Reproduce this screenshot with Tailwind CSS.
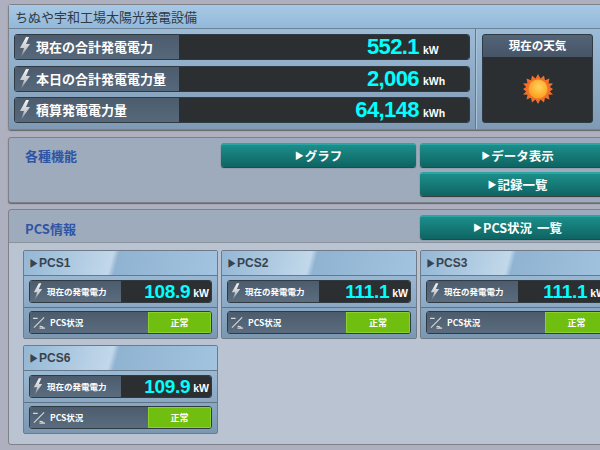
<!DOCTYPE html>
<html lang="ja">
<head>
  <meta charset="UTF-8">
  <title>ちぬや宇和工場太陽光発電設備</title>
  <script src="https://cdn.jsdelivr.net/npm/@tailwindcss/browser@4"></script>
</head>
<body class="bg-[#aeb0bf] h-[450px] w-[600px] overflow-hidden font-['Noto_Sans_CJK_JP',sans-serif]">
  <svg class="absolute w-0 h-0">
    <defs>
      <linearGradient id="boltFill" x1="0" y1="0" x2="0" y2="1"><stop offset="0" stop-color="#f4f4f4"/><stop offset="0.600" stop-color="#c4c8cc"/><stop offset="1" stop-color="#6f7a85"/></linearGradient>
      <symbol id="bolt" viewBox="0 0 12 20"><path d="M7 0 L1 11 L5 11 L2 20 L11 7 L7 7 L10 0 Z" fill="url(#boltFill)"/></symbol>
      <symbol id="phase" viewBox="0 0 14 12"><path d="M0 1 H5 M1 11 L12 0 M7 10 C8.500 8.500 9.500 11 11 10 M7 11.500 H13" fill="none" stroke="#d5d8da" stroke-width="1.200"/></symbol>
    </defs>
  </svg>

  <div class="pt-[4px] pl-[8px] w-[640px] flex flex-col">
    <!-- top panel -->
    <section class="h-[126px] rounded-[3px] border border-[#7d8288] bg-[linear-gradient(180deg,#a3c3df,#7f9ab4)] shadow-[0_1px_1px_#666]">
      <h1 class="h-[24px] pl-[6px] flex items-center text-[13px] text-[#2f3a45] border-b border-[#6d8296] bg-[linear-gradient(180deg,#a8c9e5,#93b8d8)]">ちぬや宇和工場太陽光発電設備</h1>
      <div class="flex h-[100px]">
        <div class="w-[467px] border-r border-[#62788c] pl-[5px] pr-[5px] pt-[5px] flex flex-col gap-[5.5px]">
          <div class="h-[26px] flex rounded-[3px] border border-[#2f3a42] overflow-hidden">
            <div class="w-[164px] flex items-center gap-[5px] pl-[4px] bg-[linear-gradient(180deg,#4c5c6d,#56687a)] text-[13px] font-bold text-white"><svg class="w-[12px] h-[20px]"><use href="#bolt"/></svg>現在の合計発電電力</div>
            <div class="flex-1 flex items-center justify-end bg-[#2b2f32] text-[#0ff] font-['Liberation_Sans',sans-serif] font-bold leading-none"><span class="text-[22px] tracking-[-0.6px]">552.1</span><span class="w-[50px] pl-[4px] pt-[6px] text-[10.500px] text-white">kW</span></div>
          </div>
          <div class="h-[26px] flex rounded-[3px] border border-[#2f3a42] overflow-hidden">
            <div class="w-[164px] flex items-center gap-[5px] pl-[4px] bg-[linear-gradient(180deg,#4c5c6d,#56687a)] text-[13px] font-bold text-white"><svg class="w-[12px] h-[20px]"><use href="#bolt"/></svg>本日の合計発電電力量</div>
            <div class="flex-1 flex items-center justify-end bg-[#2b2f32] text-[#0ff] font-['Liberation_Sans',sans-serif] font-bold leading-none"><span class="text-[22px] tracking-[-0.6px]">2,006</span><span class="w-[50px] pl-[4px] pt-[6px] text-[10.500px] text-white">kWh</span></div>
          </div>
          <div class="h-[26px] flex rounded-[3px] border border-[#2f3a42] overflow-hidden">
            <div class="w-[164px] flex items-center gap-[5px] pl-[4px] bg-[linear-gradient(180deg,#4c5c6d,#56687a)] text-[13px] font-bold text-white"><svg class="w-[12px] h-[20px]"><use href="#bolt"/></svg>積算発電電力量</div>
            <div class="flex-1 flex items-center justify-end bg-[#2b2f32] text-[#0ff] font-['Liberation_Sans',sans-serif] font-bold leading-none"><span class="text-[22px] tracking-[-0.6px]">64,148</span><span class="w-[50px] pl-[4px] pt-[6px] text-[10.500px] text-white">kWh</span></div>
          </div>
        </div>
        <div class="pl-[5px] pt-[5px] border-l border-[#a9c2d8]">
          <div class="w-[111px] h-[89px] rounded-[3px] border border-[#2f3a42] bg-[#2b2f32] overflow-hidden">
            <div class="h-[22px] flex items-center justify-center text-[11.500px] font-bold text-white bg-[linear-gradient(180deg,#536477,#465566)]">現在の天気</div>
            <div class="flex justify-center pt-[17px]">
              <svg class="w-[30px] h-[30px]" viewBox="0 0 30 30">
                <defs><radialGradient id="sunFill" cx="0.550" cy="0.400" r="0.600"><stop offset="0" stop-color="#ffd35c"/><stop offset="1" stop-color="#fb9f1c"/></radialGradient></defs>
                <polygon fill="#f0702a" points="15,0 17.500,4.500 21,1.500 22,6.200 26.500,4.500 25.500,9.200 30,9.500 26.800,13 30,15 26.800,17.500 30,20.500 25.500,20.800 26.500,25.500 22,23.800 21,28.500 17.500,25.500 15,30 12.500,25.500 9,28.500 8,23.800 3.500,25.500 4.500,20.800 0,20.500 3.200,17.500 0,15 3.200,13 0,9.500 4.500,9.200 3.500,4.500 8,6.200 9,1.500 12.500,4.500"/>
                <circle cx="15" cy="15" r="9.500" fill="url(#sunFill)"/>
              </svg>
            </div>
          </div>
        </div>
      </div>
    </section>

    <!-- functions -->
    <section class="mt-[7px] h-[66px] rounded-[3px] border border-[#7d8288] bg-[#9dabbd] shadow-[0_1px_1px_#666] flex">
      <h2 class="w-[212px] pl-[16px] pt-[9px] text-[13px] font-bold leading-[18px] text-[#2f55a4]">各種機能</h2>
      <div class="grid grid-cols-[195px_195px] gap-x-[4px] gap-y-[5px] pt-[5px] content-start">
        <a class="h-[24px] rounded-[3px] border-t-2 border-[#2ba5a3] bg-[linear-gradient(180deg,#1c8e8a,#0e6462)] shadow-[0_1px_1px_#333] flex items-center justify-center text-[12.500px] font-bold text-white"><span class="text-[9px] mr-[1px]">▶</span>グラフ</a>
        <a class="h-[24px] rounded-[3px] border-t-2 border-[#2ba5a3] bg-[linear-gradient(180deg,#1c8e8a,#0e6462)] shadow-[0_1px_1px_#333] flex items-center justify-center text-[12.500px] font-bold text-white"><span class="text-[9px] mr-[1px]">▶</span>データ表示</a>
        <span></span>
        <a class="h-[24px] rounded-[3px] border-t-2 border-[#2ba5a3] bg-[linear-gradient(180deg,#1c8e8a,#0e6462)] shadow-[0_1px_1px_#333] flex items-center justify-center text-[12.500px] font-bold text-white"><span class="text-[9px] mr-[1px]">▶</span>記録一覧</a>
      </div>
    </section>

    <!-- PCS info -->
    <section class="mt-[6px] h-[236px] rounded-[3px] border border-[#7d8288] bg-[linear-gradient(180deg,#9dabbd_0,#9dabbd_33px,#b9c3d1_33px)]">
      <div class="h-[33px] flex border-b border-[#8a929c]">
        <h2 class="w-[411px] pl-[16px] pt-[10px] text-[13px] font-bold leading-[18px] text-[#2f55a4]">PCS情報</h2>
        <a class="mt-[5px] w-[195px] h-[24px] rounded-[3px] border-t-2 border-[#2ba5a3] bg-[linear-gradient(180deg,#1c8e8a,#0e6462)] shadow-[0_1px_1px_#333] flex items-center justify-center text-[12.500px] font-bold text-white [word-spacing:2px]"><span class="text-[9px] mr-[1px]">▶</span>PCS状況 一覧</a>
      </div>
      <div class="grid grid-cols-[195px_196px_195px] gap-x-[3px] gap-y-[6px] pl-[14px] pt-[7px]">

        <div class="h-[89px] rounded-[2px] border border-[#6f7a86] bg-[linear-gradient(180deg,#a6c5df,#7b98b3)]">
          <div class="h-[25px] pl-[5px] flex items-center text-[12px] font-bold text-[#39434e] font-['Liberation_Sans',sans-serif] border-b border-[#66798c] bg-[linear-gradient(105deg,#93b7d5_0,#c2d8ea_45%,#90b3d1_48%,#a2c4e0_100%)]"><span class="text-[10px]">▶</span>PCS1</div>
          <div class="h-[32px] border-b border-[#5f7386] px-[5px] pt-[4px]">
            <div class="h-[23px] flex rounded-[3px] border border-[#2f3a42] overflow-hidden">
              <div class="w-[91px] flex items-center gap-[4px] pl-[3px] bg-[linear-gradient(180deg,#4c5c6d,#5a6c7e)] text-[8.500px] font-bold text-white"><svg class="w-[10px] h-[17px]"><use href="#bolt"/></svg>現在の発電電力</div>
              <div class="flex-1 flex items-center justify-end pr-[2px] bg-[#2b2f32] text-[#0ff] font-['Liberation_Sans',sans-serif] font-bold leading-none"><span class="text-[19px] tracking-[-0.3px]">108.9</span><span class="pl-[3px] pt-[4px] text-[10.500px] text-white">kW</span></div>
            </div>
          </div>
          <div class="h-[30px] px-[5px] pt-[3px]">
            <div class="h-[23px] flex rounded-[3px] border border-[#2f3a42] overflow-hidden">
              <div class="w-[118px] flex items-center gap-[4px] pl-[3px] bg-[linear-gradient(180deg,#4c5c6d,#5a6c7e)] text-[8.500px] font-bold text-white"><svg class="w-[13px] h-[12px]"><use href="#phase"/></svg>PCS状況</div>
              <div class="flex-1 flex items-center justify-center bg-[#6fbe10] border border-[#8bd02f] text-[9px] font-bold text-white">正常</div>
            </div>
          </div>
        </div>

        <div class="h-[89px] rounded-[2px] border border-[#6f7a86] bg-[linear-gradient(180deg,#a6c5df,#7b98b3)]">
          <div class="h-[25px] pl-[5px] flex items-center text-[12px] font-bold text-[#39434e] font-['Liberation_Sans',sans-serif] border-b border-[#66798c] bg-[linear-gradient(105deg,#93b7d5_0,#c2d8ea_45%,#90b3d1_48%,#a2c4e0_100%)]"><span class="text-[10px]">▶</span>PCS2</div>
          <div class="h-[32px] border-b border-[#5f7386] px-[5px] pt-[4px]">
            <div class="h-[23px] flex rounded-[3px] border border-[#2f3a42] overflow-hidden">
              <div class="w-[91px] flex items-center gap-[4px] pl-[3px] bg-[linear-gradient(180deg,#4c5c6d,#5a6c7e)] text-[8.500px] font-bold text-white"><svg class="w-[10px] h-[17px]"><use href="#bolt"/></svg>現在の発電電力</div>
              <div class="flex-1 flex items-center justify-end pr-[2px] bg-[#2b2f32] text-[#0ff] font-['Liberation_Sans',sans-serif] font-bold leading-none"><span class="text-[19px] tracking-[-0.3px]">111.1</span><span class="pl-[3px] pt-[4px] text-[10.500px] text-white">kW</span></div>
            </div>
          </div>
          <div class="h-[30px] px-[5px] pt-[3px]">
            <div class="h-[23px] flex rounded-[3px] border border-[#2f3a42] overflow-hidden">
              <div class="w-[118px] flex items-center gap-[4px] pl-[3px] bg-[linear-gradient(180deg,#4c5c6d,#5a6c7e)] text-[8.500px] font-bold text-white"><svg class="w-[13px] h-[12px]"><use href="#phase"/></svg>PCS状況</div>
              <div class="flex-1 flex items-center justify-center bg-[#6fbe10] border border-[#8bd02f] text-[9px] font-bold text-white">正常</div>
            </div>
          </div>
        </div>

        <div class="h-[89px] rounded-[2px] border border-[#6f7a86] bg-[linear-gradient(180deg,#a6c5df,#7b98b3)]">
          <div class="h-[25px] pl-[5px] flex items-center text-[12px] font-bold text-[#39434e] font-['Liberation_Sans',sans-serif] border-b border-[#66798c] bg-[linear-gradient(105deg,#93b7d5_0,#c2d8ea_45%,#90b3d1_48%,#a2c4e0_100%)]"><span class="text-[10px]">▶</span>PCS3</div>
          <div class="h-[32px] border-b border-[#5f7386] px-[5px] pt-[4px]">
            <div class="h-[23px] flex rounded-[3px] border border-[#2f3a42] overflow-hidden">
              <div class="w-[91px] flex items-center gap-[4px] pl-[3px] bg-[linear-gradient(180deg,#4c5c6d,#5a6c7e)] text-[8.500px] font-bold text-white"><svg class="w-[10px] h-[17px]"><use href="#bolt"/></svg>現在の発電電力</div>
              <div class="flex-1 flex items-center justify-end pr-[2px] bg-[#2b2f32] text-[#0ff] font-['Liberation_Sans',sans-serif] font-bold leading-none"><span class="text-[19px] tracking-[-0.3px]">111.1</span><span class="pl-[3px] pt-[4px] text-[10.500px] text-white">kW</span></div>
            </div>
          </div>
          <div class="h-[30px] px-[5px] pt-[3px]">
            <div class="h-[23px] flex rounded-[3px] border border-[#2f3a42] overflow-hidden">
              <div class="w-[118px] flex items-center gap-[4px] pl-[3px] bg-[linear-gradient(180deg,#4c5c6d,#5a6c7e)] text-[8.500px] font-bold text-white"><svg class="w-[13px] h-[12px]"><use href="#phase"/></svg>PCS状況</div>
              <div class="flex-1 flex items-center justify-center bg-[#6fbe10] border border-[#8bd02f] text-[9px] font-bold text-white">正常</div>
            </div>
          </div>
        </div>

        <div class="h-[89px] rounded-[2px] border border-[#6f7a86] bg-[linear-gradient(180deg,#a6c5df,#7b98b3)]">
          <div class="h-[25px] pl-[5px] flex items-center text-[12px] font-bold text-[#39434e] font-['Liberation_Sans',sans-serif] border-b border-[#66798c] bg-[linear-gradient(105deg,#93b7d5_0,#c2d8ea_45%,#90b3d1_48%,#a2c4e0_100%)]"><span class="text-[10px]">▶</span>PCS6</div>
          <div class="h-[32px] border-b border-[#5f7386] px-[5px] pt-[4px]">
            <div class="h-[23px] flex rounded-[3px] border border-[#2f3a42] overflow-hidden">
              <div class="w-[91px] flex items-center gap-[4px] pl-[3px] bg-[linear-gradient(180deg,#4c5c6d,#5a6c7e)] text-[8.500px] font-bold text-white"><svg class="w-[10px] h-[17px]"><use href="#bolt"/></svg>現在の発電電力</div>
              <div class="flex-1 flex items-center justify-end pr-[2px] bg-[#2b2f32] text-[#0ff] font-['Liberation_Sans',sans-serif] font-bold leading-none"><span class="text-[19px] tracking-[-0.3px]">109.9</span><span class="pl-[3px] pt-[4px] text-[10.500px] text-white">kW</span></div>
            </div>
          </div>
          <div class="h-[30px] px-[5px] pt-[3px]">
            <div class="h-[23px] flex rounded-[3px] border border-[#2f3a42] overflow-hidden">
              <div class="w-[118px] flex items-center gap-[4px] pl-[3px] bg-[linear-gradient(180deg,#4c5c6d,#5a6c7e)] text-[8.500px] font-bold text-white"><svg class="w-[13px] h-[12px]"><use href="#phase"/></svg>PCS状況</div>
              <div class="flex-1 flex items-center justify-center bg-[#6fbe10] border border-[#8bd02f] text-[9px] font-bold text-white">正常</div>
            </div>
          </div>
        </div>

      </div>
    </section>
  </div>
</body>
</html>
